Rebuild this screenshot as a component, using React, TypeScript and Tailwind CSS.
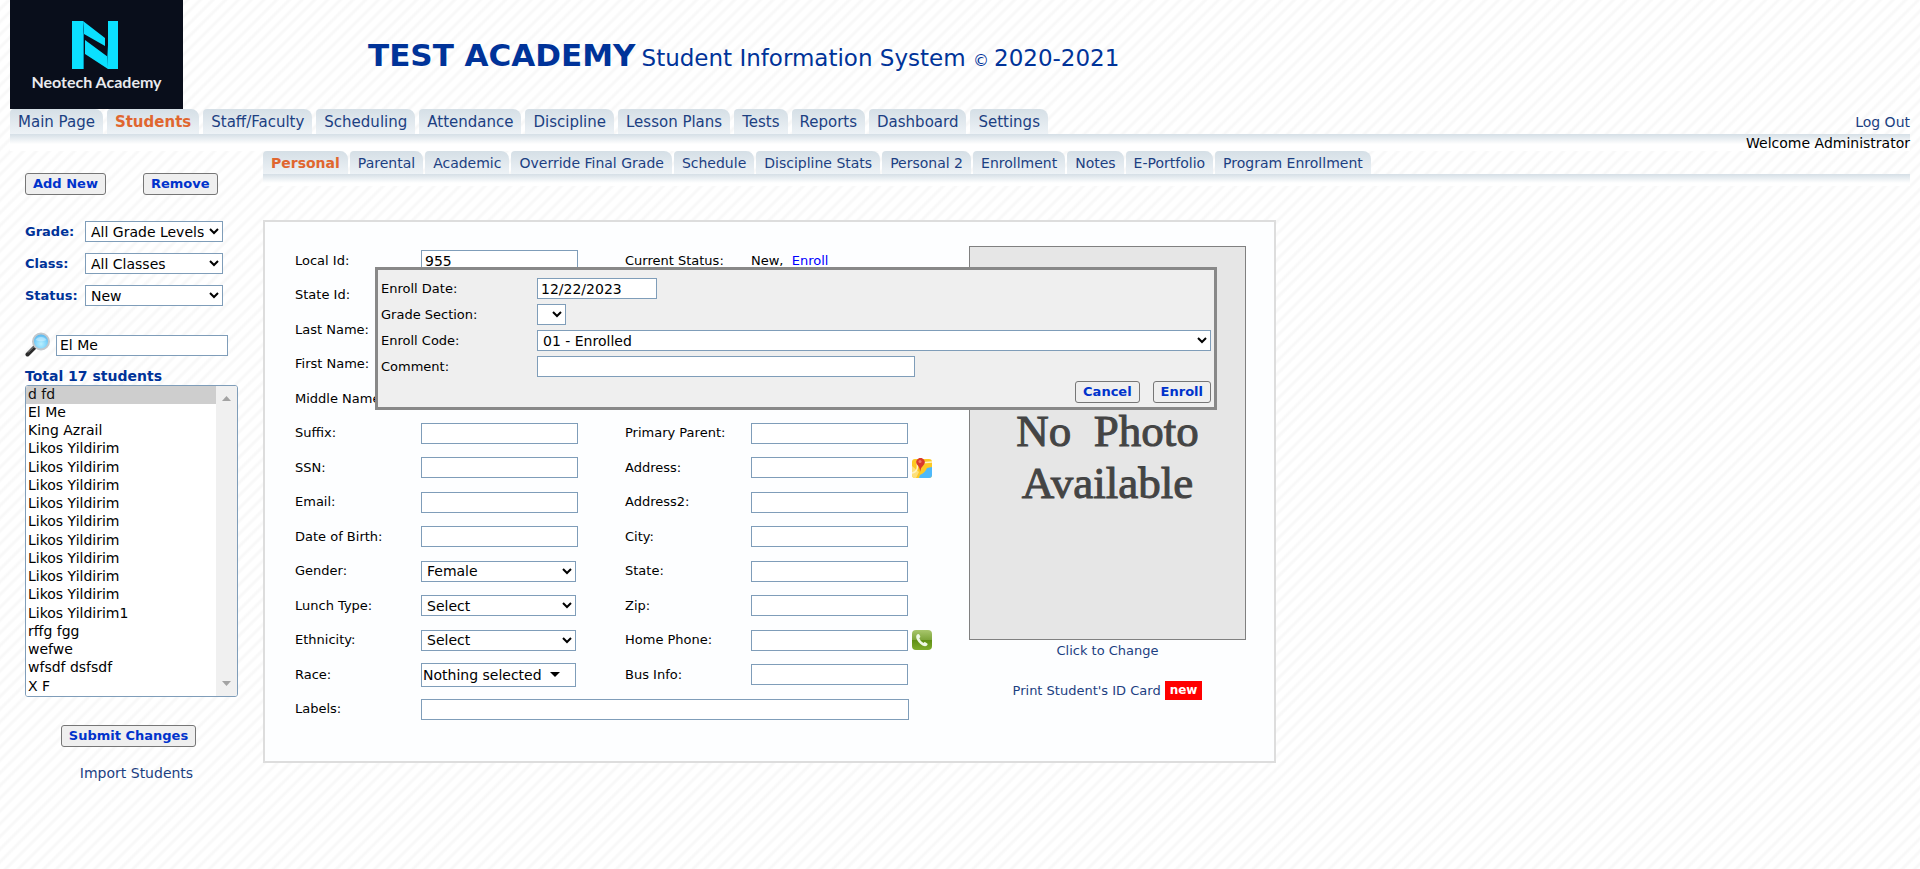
import type { ReactNode } from "react";

const mainTabs = [
  "Main Page",
  "Students",
  "Staff/Faculty",
  "Scheduling",
  "Attendance",
  "Discipline",
  "Lesson Plans",
  "Tests",
  "Reports",
  "Dashboard",
  "Settings",
];

const subTabs = [
  "Personal",
  "Parental",
  "Academic",
  "Override Final Grade",
  "Schedule",
  "Discipline Stats",
  "Personal 2",
  "Enrollment",
  "Notes",
  "E-Portfolio",
  "Program Enrollment",
];

const students = [
  "d fd",
  "El Me",
  "King Azrail",
  ...Array.from({ length: 9 }, () => "Likos Yildirim"),
  "Likos Yildirim1",
  "rffg fgg",
  "wefwe",
  "wfsdf dsfsdf",
  "X F",
];

const box = "h-[21px] border border-[#7f9db9] bg-white text-sm text-black";
const field = box + " px-[3px]";
const dropDown = box + " pl-px pr-[2px]";

function Tab({ label, active, small }: { label: string; active: boolean; small?: boolean }) {
  return (
    <a
      href="#"
      className={
        "flex items-center rounded-tl-sm rounded-tr-lg bg-linear-to-b from-[#d5dfe6] to-[#edf2f6] whitespace-nowrap " +
        (small ? "h-[23px] px-2 text-sm " : "h-[25px] px-2 pt-px text-[15px] ") +
        (active ? "font-bold text-[#e0662f]" : "text-[#1c3f82]")
      }
    >
      {label}
    </a>
  );
}

function PushButton({ children }: { children: ReactNode }) {
  return (
    <button
      type="button"
      className="h-[22px] rounded-[3px] border border-[#767676] bg-[#efefef] px-[7px] text-[13px] leading-5 font-bold whitespace-nowrap text-[#0033cc]"
    >
      {children}
    </button>
  );
}

function Logo() {
  return (
    <div className="flex h-[109px] w-[173px] flex-col items-center bg-[#090e1b] pt-[21px]">
      <svg width="49" height="48" viewBox="0 0 49 48" aria-hidden="true">
        <path d="M0 0H11V48H0Z M36 0H46V48H36Z" fill="#0be0ff" />
        <path d="M11 0L33 17V25L12 13Z M13 19L36 36V48L13 33Z" fill="#0be0ff" />
        <path d="M11 1L12 13V48H11Z M35 36L36 24V47Z" fill="#0592b4" />
      </svg>
      <span className="mt-[3px] font-['Lato',sans-serif] text-base leading-5 font-bold text-[#e8eaee]">
        Neotech Academy
      </span>
    </div>
  );
}

function MagnifierIcon() {
  return (
    <svg width="26" height="26" viewBox="0 0 26 26" aria-hidden="true">
      <defs>
        <radialGradient id="lens" cx="0.5" cy="0.65" r="0.6">
          <stop offset="0" stopColor="#b8f0ff" />
          <stop offset="0.6" stopColor="#7fd3fa" />
          <stop offset="1" stopColor="#55b4ee" />
        </radialGradient>
      </defs>
      <path d="M10 15L2.500 22.500" stroke="#2b2b2b" strokeWidth="4" strokeLinecap="round" />
      <path d="M9 14.500L3 20.500" stroke="#9b9b9b" strokeWidth="1" />
      <circle cx="16" cy="9.500" r="8" fill="url(#lens)" stroke="#c3c8cc" strokeWidth="2" />
      <path d="M10.500 8a6 5 0 0 1 11 0q-5.500 2.500-11 0z" fill="#fff" opacity="0.35" />
    </svg>
  );
}

function MapIcon() {
  return (
    <svg width="20" height="20" viewBox="0 0 20 20" role="img" aria-label="Map">
      <rect y="1" width="20" height="19" rx="3" fill="#fdc924" />
      <path d="M0 8L7 14L4 20H3Q0 20 0 17Z" fill="#fde07b" />
      <path d="M0 15Q7 14 5 4M8 5L20 4" stroke="#fff3c4" strokeWidth="1.500" fill="none" />
      <path d="M20 9L15 10Q13 15 8 17L7 20H17Q20 20 20 17Z" fill="#4db9fb" />
      <path d="M8 14Q8 9 5 6.500A4.200 4.200 0 1 1 12 6.500Q9 9 8 14Z" fill="#d93a2b" />
      <circle cx="8" cy="3.500" r="1.500" fill="#ef7a68" />
    </svg>
  );
}

function PhoneIcon() {
  return (
    <svg width="20" height="20" viewBox="0 0 20 20" role="img" aria-label="Call">
      <defs>
        <linearGradient id="green" x1="0" y1="0" x2="0" y2="1">
          <stop offset="0" stopColor="#a8c66c" />
          <stop offset="0.48" stopColor="#7fa63c" />
          <stop offset="0.52" stopColor="#5f8f14" />
          <stop offset="1" stopColor="#7fae2c" />
        </linearGradient>
      </defs>
      <rect width="20" height="20" rx="4" fill="url(#green)" />
      <path
        d="M5 4.500Q6.500 3.300 7.300 4.500L8.300 6.500Q8.500 7.300 7.300 8.200Q8.500 11.500 11.500 13Q12.500 11.800 13.300 12.200L15.300 13.500Q16.200 14.200 15 15.500Q13.300 17 10.500 15.500Q6 13 4.300 8Q3.800 5.800 5 4.500Z"
        fill="#eef8e4"
      />
    </svg>
  );
}

function Label({ id, children }: { id: string; children: ReactNode }) {
  return (
    <label htmlFor={id} className="whitespace-nowrap">
      {children}
    </label>
  );
}

function TextRow({ id, label, value, icon }: { id: string; label: string; value?: string; icon?: ReactNode }) {
  return (
    <>
      <Label id={id}>{label}</Label>
      <div className="flex items-center gap-1">
        <input id={id} type="text" defaultValue={value} className={field + " w-[157px] shrink-0"} />
        {icon}
      </div>
    </>
  );
}

function HiddenRow({ id, label }: { id: string; label: string }) {
  return (
    <>
      <Label id={id}>{label}</Label>
      <div className="col-span-3 flex items-center">
        <input id={id} type="text" className={field + " w-[157px]"} />
      </div>
    </>
  );
}

function SelectRow({ id, label, value }: { id: string; label: string; value: string }) {
  return (
    <>
      <Label id={id}>{label}</Label>
      <div className="flex items-center">
        <select id={id} className={dropDown + " w-[155px]"}>
          <option>{value}</option>
        </select>
      </div>
    </>
  );
}

function Filter({ id, label, value }: { id: string; label: string; value: string }) {
  return (
    <div className="flex items-center">
      <label htmlFor={id} className="w-[60px] text-[13px] font-bold text-[#003399]">
        {label}
      </label>
      <select id={id} className={dropDown + " w-[138px]"}>
        <option>{value}</option>
      </select>
    </div>
  );
}

function Sidebar() {
  return (
    <aside className="flex w-[253px] shrink-0 flex-col items-start pt-[22px] pl-[15px]">
      <div className="flex gap-[37px]">
        <PushButton>Add New</PushButton>
        <PushButton>Remove</PushButton>
      </div>
      <div className="mt-[26px] flex flex-col gap-[11px]">
        <Filter id="grade" label="Grade:" value="All Grade Levels" />
        <Filter id="class" label="Class:" value="All Classes" />
        <Filter id="status" label="Status:" value="New" />
      </div>
      <div className="mt-[26px] flex items-center gap-[5px]">
        <MagnifierIcon />
        <input type="text" aria-label="Search students" defaultValue="El Me" className={field + " w-[172px]"} />
      </div>
      <label htmlFor="students" className="mt-[9px] text-sm leading-[18px] font-bold text-[#003399]">
        Total 17 students
      </label>
      <div className="flex w-[213px] overflow-hidden rounded-[3px] border border-[#7f9db9] bg-white">
        <select
          id="students"
          size={17}
          defaultValue="0"
          className="h-[310px] flex-1 overflow-hidden rounded-none bg-white text-sm text-black outline-none"
        >
          {students.map((name, i) => (
            <option
              key={i}
              value={i}
              className="h-[18px] min-h-0 px-[2px] py-0 leading-[18px] checked:bg-[#cecece] nth-[4n]:h-[19px]"
            >
              {name}
            </option>
          ))}
        </select>
        <div className="flex w-[21px] flex-col items-center justify-between bg-[#f0f0f0] py-2.5">
          <svg width="9" height="5" viewBox="0 0 9 5" aria-hidden="true">
            <path d="M0 5L4.500 0L9 5Z" fill="#a3a3a3" />
          </svg>
          <svg width="9" height="5" viewBox="0 0 9 5" aria-hidden="true">
            <path d="M0 0L4.500 5L9 0Z" fill="#a3a3a3" />
          </svg>
        </div>
      </div>
      <div className="mt-7 flex w-[207px] flex-col items-center gap-4">
        <PushButton>Submit Changes</PushButton>
        <a href="#" className="pl-4 text-sm text-[#1c3f82]">
          Import Students
        </a>
      </div>
    </aside>
  );
}

function EnrollDialog() {
  return (
    <div
      role="dialog"
      aria-label="Enroll"
      className="absolute top-[45px] left-[110px] border-[3px] border-[#888] bg-[#efefef] px-[3px] pt-2 pb-1"
    >
      <div className="grid grid-cols-[156px_674px] items-center justify-items-start gap-y-[5px]">
        <Label id="enroll-date">Enroll Date:</Label>
        <input id="enroll-date" type="text" defaultValue="12/22/2023" className={field + " w-[120px]"} />
        <Label id="section">Grade Section:</Label>
        <select id="section" className={dropDown + " w-[29px]"} />
        <Label id="code">Enroll Code:</Label>
        <select id="code" className={dropDown + " w-full"}>
          <option>01 - Enrolled</option>
        </select>
        <Label id="comment">Comment:</Label>
        <input id="comment" type="text" className={field + " w-[378px]"} />
      </div>
      <div className="mt-1 flex justify-end gap-[13px]">
        <PushButton>Cancel</PushButton>
        <PushButton>Enroll</PushButton>
      </div>
    </div>
  );
}

function StudentForm() {
  return (
    <main className="relative mt-[34px] flex w-fit gap-[34px] border-2 border-[#dddddd] bg-[#fdfeff] pr-7 pb-[35px] pl-[30px] text-[13px] text-black">
      <div className="mt-[21px] grid grid-cols-[126px_204px_126px_184px] grid-rows-[repeat(7,35px_34px)] items-center">
        <TextRow id="local-id" label="Local Id:" value="955" />
        <span>Current Status:</span>
        <span>
          New,&nbsp;{" "}
          <a href="#" className="text-[#0000ff]">
            Enroll
          </a>
        </span>
        <HiddenRow id="state-id" label="State Id:" />
        <HiddenRow id="last-name" label="Last Name:" />
        <HiddenRow id="first-name" label="First Name:" />
        <HiddenRow id="middle-name" label="Middle Name:" />
        <TextRow id="suffix" label="Suffix:" />
        <TextRow id="parent" label="Primary Parent:" />
        <TextRow id="ssn" label="SSN:" />
        <TextRow id="address" label="Address:" icon={<MapIcon />} />
        <TextRow id="email" label="Email:" />
        <TextRow id="address2" label="Address2:" />
        <TextRow id="dob" label="Date of Birth:" />
        <TextRow id="city" label="City:" />
        <SelectRow id="gender" label="Gender:" value="Female" />
        <TextRow id="state" label="State:" />
        <SelectRow id="lunch" label="Lunch Type:" value="Select" />
        <TextRow id="zip" label="Zip:" />
        <SelectRow id="ethnicity" label="Ethnicity:" value="Select" />
        <TextRow id="phone" label="Home Phone:" icon={<PhoneIcon />} />
        <Label id="race">Race:</Label>
        <button
          id="race"
          type="button"
          className="flex h-6 w-[155px] items-center gap-2 border border-[#7f9db9] bg-white pl-px text-sm whitespace-nowrap"
        >
          Nothing selected
          <svg width="10" height="5" viewBox="0 0 10 5" aria-hidden="true">
            <path d="M0 0H10L5 5Z" fill="#000" />
          </svg>
        </button>
        <TextRow id="bus" label="Bus Info:" />
        <Label id="labels">Labels:</Label>
        <input id="labels" type="text" className={field + " col-span-3 w-[488px]"} />
      </div>
      <div className="mt-6 flex w-[277px] flex-col items-center text-[#1c3f82]">
        <div className="flex h-[394px] w-full flex-col items-center justify-center border border-[#808080] bg-[#e6e6e6] pt-7 font-['Liberation_Serif',serif] text-[45px] leading-[52px] text-[#444] [-webkit-text-stroke:1px_#444]">
          <span>No&nbsp;&nbsp;Photo</span>
          <span>Available</span>
        </div>
        <a href="#" className="mt-0.5 leading-[18px]">
          Click to Change
        </a>
        <div className="mt-[21px] flex items-center gap-1">
          <a href="#">Print Student's ID Card</a>
          <span className="bg-[#ff0000] px-[5px] text-xs leading-[19px] font-bold text-white">new</span>
        </div>
      </div>
      <EnrollDialog />
    </main>
  );
}

export default function App() {
  return (
    <div className="min-h-screen bg-[repeating-linear-gradient(135deg,#ffffff_0px,#ffffff_4px,#f8f8f8_6px,#f8f8f8_7px,#ffffff_9px)] px-2.5 font-['DejaVu_Sans',sans-serif]">
      <header className="flex">
        <Logo />
        <h1 className="mt-[34px] ml-[185px] text-[23px] leading-[42px] text-[#003399]">
          <b className="text-[31px]">TEST ACADEMY</b>
          <span className="pl-1.5">Student Information System </span>
          <span className="text-base">© </span>
          2020-2021
        </h1>
      </header>
      <div className="flex items-center justify-between">
        <nav className="flex gap-1">
          {mainTabs.map((t) => (
            <Tab key={t} label={t} active={t === "Students"} />
          ))}
        </nav>
        <a href="#" className="text-sm text-[#1c3f82]">
          Log Out
        </a>
      </div>
      <div className="flex h-[17px] items-center justify-end bg-linear-to-b from-[#d5dfe6] to-white to-60% text-sm text-black">
        Welcome Administrator
      </div>
      <div className="flex">
        <Sidebar />
        <div className="flex-1">
          <nav className="flex gap-[2px]">
            {subTabs.map((t) => (
              <Tab key={t} label={t} active={t === "Personal"} small />
            ))}
          </nav>
          <div className="h-3 bg-linear-to-b from-[#d5dfe6] to-white to-75%" />
          <StudentForm />
        </div>
      </div>
    </div>
  );
}
